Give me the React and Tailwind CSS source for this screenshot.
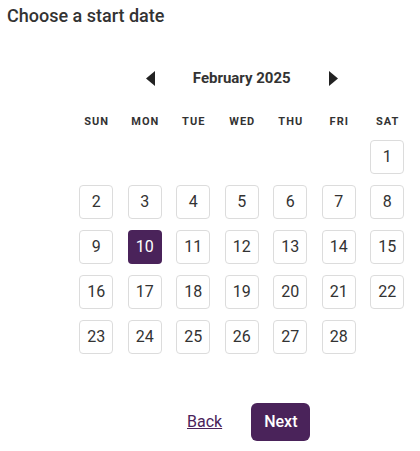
import React from "react";

const days = [];
for (let i = 0; i < 6; i++) days.push(null);
for (let d = 1; d <= 28; d++) days.push(d);

const weekdays = ["SUN", "MON", "TUE", "WED", "THU", "FRI", "SAT"];

export default function App() {
  return (
    <div className="w-[420px] h-[451px] bg-white text-[#333] font-['Roboto',sans-serif] overflow-hidden">
      <h2 className="pl-[7px] pt-[2px] text-[18px] leading-[28px] font-medium text-[#333]">
        Choose a start date
      </h2>
      <div className="ml-[72px] w-[339.5px]">
        <div className="mt-[36px] h-[24px] flex items-center justify-center gap-[38px]">
          <button className="w-[9px] h-[15px] flex items-center">
            <svg width="9" height="15" viewBox="0 0 9 15">
              <path d="M9 0 L0 7.5 L9 15 Z" fill="#222" />
            </svg>
          </button>
          <div className="text-[15px] leading-[24px] font-bold text-[#333]">February 2025</div>
          <button className="w-[9px] h-[15px] flex items-center">
            <svg width="9" height="15" viewBox="0 0 9 15">
              <path d="M0 0 L9 7.5 L0 15 Z" fill="#222" />
            </svg>
          </button>
        </div>
        <div className="mt-[24px] grid grid-cols-7 text-[11px] leading-[16px] font-bold tracking-[1px] text-[#333]">
          {weekdays.map((w) => (
            <div key={w} className="text-center pl-[1px]">{w}</div>
          ))}
        </div>
        <div className="mt-[10px] grid grid-cols-7 gap-y-[11px]">
          {days.map((d, i) =>
            d === null ? (
              <div key={i} className="h-[34px]" />
            ) : (
              <div key={i} className="flex justify-center">
                <div
                  className={
                    d === 10
                      ? "w-[34px] h-[34px] rounded-[4px] bg-[#4a235a] text-white flex items-center justify-center text-[16px]"
                      : "w-[34px] h-[34px] rounded-[4px] border border-[#dcdcdc] bg-white text-[#333] flex items-center justify-center text-[16px]"
                  }
                >
                  {d}
                </div>
              </div>
            )
          )}
        </div>
      </div>
      <div className="mt-[49px] flex items-center">
        <a className="ml-[187px] text-[16px] leading-[24px] text-[#4a235a] underline">Back</a>
        <button className="ml-[29px] h-[38px] px-[13px] rounded-[6px] bg-[#4a235a] text-white text-[16px] font-medium">
          Next
        </button>
      </div>
    </div>
  );
}
